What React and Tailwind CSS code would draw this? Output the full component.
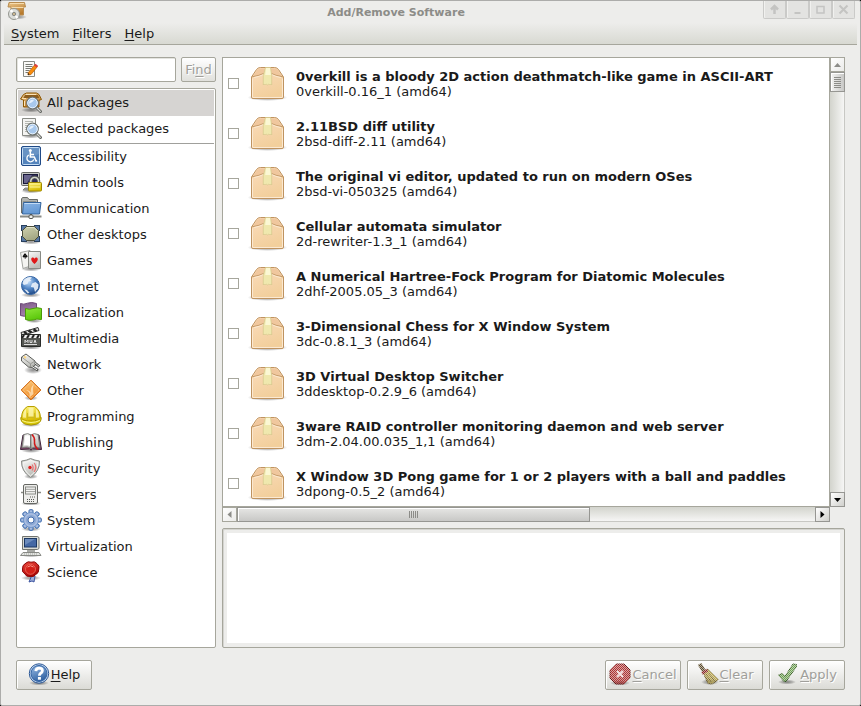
import React from "react";

const packages = [
  ["0verkill is a bloody 2D action deathmatch-like game in ASCII-ART", "0verkill-0.16_1 (amd64)"],
  ["2.11BSD diff utility", "2bsd-diff-2.11 (amd64)"],
  ["The original vi editor, updated to run on modern OSes", "2bsd-vi-050325 (amd64)"],
  ["Cellular automata simulator", "2d-rewriter-1.3_1 (amd64)"],
  ["A Numerical Hartree-Fock Program for Diatomic Molecules", "2dhf-2005.05_3 (amd64)"],
  ["3-Dimensional Chess for X Window System", "3dc-0.8.1_3 (amd64)"],
  ["3D Virtual Desktop Switcher", "3ddesktop-0.2.9_6 (amd64)"],
  ["3ware RAID controller monitoring daemon and web server", "3dm-2.04.00.035_1,1 (amd64)"],
  ["X Window 3D Pong game for 1 or 2 players with a ball and paddles", "3dpong-0.5_2 (amd64)"],
];

function Gradient({ id, from, to }) {
  return (
    <linearGradient id={id} x1="0" y1="0" x2="0.4" y2="1">
      <stop offset="0" stopColor={from} />
      <stop offset="1" stopColor={to} />
    </linearGradient>
  );
}

function SharedDefs() {
  return (
    <svg className="absolute h-0 w-0" aria-hidden="true">
      <defs>
        <Gradient id="gBlue" from="#9cbfe8" to="#3465a4" />
        <Gradient id="gSky" from="#8ab4e4" to="#6498d4" />
        <Gradient id="gGrey" from="#fbfbfa" to="#bcbdb8" />
        <Gradient id="gBrown" from="#edc88c" to="#b87a2c" />
        <Gradient id="gYellow" from="#fff47a" to="#d8bc00" />
        <Gradient id="gGreen" from="#90e83c" to="#5cc80c" />
        <Gradient id="gPurple" from="#7c5886" to="#a888b0" />
        <Gradient id="gOrange" from="#fccc80" to="#f08c28" />
        <Gradient id="gRed" from="#f04a40" to="#a80404" />
        <Gradient id="gBox" from="#fbdcbc" to="#f2cf9c" />
        <Gradient id="gOlive" from="#d0d2b0" to="#a4a884" />
        <Gradient id="gScreen" from="#7c9cd0" to="#244480" />
        <radialGradient id="gGlobe" cx="0.4" cy="0.3" r="0.7">
          <stop offset="0" stopColor="#c0dcfa" />
          <stop offset="0.55" stopColor="#5084c4" />
          <stop offset="1" stopColor="#204a87" />
        </radialGradient>
        <radialGradient id="gShadow">
          <stop offset="0" stopColor="#000" stopOpacity="0.45" />
          <stop offset="0.6" stopColor="#000" stopOpacity="0.22" />
          <stop offset="1" stopColor="#000" stopOpacity="0" />
        </radialGradient>
        <pattern id="checks" width="2" height="2" patternUnits="userSpaceOnUse">
          <rect width="2" height="2" fill="#666" />
          <rect width="1" height="1" fill="#fff" />
          <rect x="1" y="1" width="1" height="1" fill="#fff" />
        </pattern>
        <mask id="stipple" maskUnits="userSpaceOnUse" x="0" y="0" width="22" height="22">
          <rect width="22" height="22" fill="url(#checks)" shapeRendering="crispEdges" />
        </mask>
      </defs>
    </svg>
  );
}

const Shadow = ({ cx = 11, cy = 19.5, rx = 10, ry = 2.5 }) => (
  <ellipse cx={cx} cy={cy} rx={rx} ry={ry} fill="url(#gShadow)" />
);

const Magnifier = () => (
  <>
    <path d="M16.5 16.5l4 4" stroke="#666864" strokeWidth="3" strokeLinecap="round" />
    <path d="M17 17l3.3 3.3" stroke="#d8dad6" strokeWidth="1.2" strokeLinecap="round" />
    <circle cx="12.5" cy="12" r="5.8" fill="#a9c8ee" stroke="#6d716d" strokeWidth="1.2" />
    <circle cx="12.5" cy="12" r="4.8" fill="#a8c8ec" stroke="#e8f2fc" strokeWidth="1" />
    <path d="M9 12.500c0-3 2.300-4.400 5-3.600-1 1.800-2.800 3-5 3.600z" fill="#e4effb" />
  </>
);

const art = {
  all: (
    <>
      <Shadow cy={19} />
      <path d="M3.5 3.5l3-1.500h10l2.500 1.500 2.500 5-2.500.8V16H3.500V9L.5 8z" fill="url(#gBrown)" stroke="#8f5902" />
      <path d="M5 4h13l1.300 3H3.500z" fill="#8c5c1c" />
      <path d="M6 3.500h10M2 7.600h4M4.500 10v5" stroke="#fbe4b8" />
      <Magnifier />
    </>
  ),
  selected: (
    <>
      <Shadow cy={19} />
      <path d="M2.500 1.500h13v17h-13z" fill="#f4f4f2" stroke="#888a85" />
      <path d="M5 4.500h8M5 6.500h8M5 8.500h3M5 10.500h2M5 12.500h2M5 14.500h4" stroke="#b4b6b0" />
      <Magnifier />
    </>
  ),
  accessibility: (
    <>
      <rect x="1.500" y="1.500" width="19" height="19" rx="1.500" fill="#5484bc" stroke="#204a87" />
      <rect x="2.500" y="2.500" width="17" height="17" rx="1" fill="none" stroke="#c4dcf4" />
      <path d="M3 3h16v6Q12 12 3 12z" fill="#fff" opacity=".12" />
      <circle cx="10.300" cy="5.500" r="1.500" fill="#fff" />
      <path d="M10.300 7v5h4l1.800 4 1-.4M10.500 9.500h3.500" fill="none" stroke="#fff" strokeWidth="1.500" />
      <path d="M8.800 10a3.600 3.600 0 1 0 5 4.600" fill="none" stroke="#fff" strokeWidth="1.300" />
    </>
  ),
  admin: (
    <>
      <Shadow cy={20} />
      <rect x="1.500" y="1.500" width="18" height="13" rx="1" fill="#c8cac6" stroke="#666864" />
      <rect x="3.500" y="3.500" width="14" height="9" fill="#302c58" stroke="#181838" />
      <path d="M4 4h8l-5 8H4z" fill="#68648c" />
      <path d="M5 17h6v2H3z" fill="#a4a6a2" stroke="#72746f" strokeWidth=".8" />
      <path d="M10.800 12V9.500a4 4 0 0 1 7.800 0V12" fill="none" stroke="#555753" strokeWidth="3.200" />
      <path d="M10.800 12V9.500a4 4 0 0 1 7.800 0V12" fill="none" stroke="#d3d7cf" strokeWidth="1.400" />
      <rect x="8.500" y="11.500" width="13" height="8.500" rx=".8" fill="url(#gYellow)" stroke="#a08800" />
      <path d="M10 13h10M10 16h10" stroke="#fff69a" />
    </>
  ),
  communication: (
    <>
      <path d="M1.500 16V2l1-1.500h5L9 2.500h8.500V16z" fill="#b4b6b2" stroke="#696b67" />
      <path d="M3 4.500h13M3 6.500h4" stroke="#8e908c" />
      <path d="M3.500 5.500h17.500L19.500 17H2.500z" fill="url(#gSky)" stroke="#34649c" />
      <path d="M4.500 6.500h15.500" stroke="#c3dbf5" />
      <path d="M0 19.500h21.500" stroke="#888a85" strokeWidth="2" />
      <path d="M11 17v1" stroke="#555753" strokeWidth="2" />
      <rect x="9" y="18" width="4" height="3.500" rx="1" fill="#f0f0ee" stroke="#555753" />
    </>
  ),
  desktops: (
    <>
      <Shadow cy={19} />
      <g fill="#5878a4" stroke="#28405e">
        <rect x="1.500" y="2.500" width="5" height="5" />
        <rect x="14.500" y="2.500" width="5" height="5" />
        <rect x="1.500" y="13.500" width="5" height="5" />
        <rect x="14.500" y="13.500" width="5" height="5" />
      </g>
      <path d="M6.500 3.500h8l4 4v6l-4 4h-8l-4-4v-6z" fill="url(#gOlive)" stroke="#4c4e3a" />
      <path d="M7 4.500h7l3.500 3.500" fill="none" stroke="#e2e4cb" />
    </>
  ),
  games: (
    <>
      <Shadow cy={20} />
      <path d="M.5 3.500L10 1.500l2 15-9 3z" fill="#f4f4f2" stroke="#a4a6a2" />
      <circle cx="5" cy="5.600" r="1.200" fill="#111" />
      <circle cx="4" cy="7.300" r="1.200" fill="#111" />
      <circle cx="6.200" cy="7.200" r="1.200" fill="#111" />
      <path d="M5 6.500L6 9.500H4.600z" fill="#111" />
      <path d="M8.500 2.500h12v17h-12z" fill="url(#gGrey)" stroke="#888a85" />
      <path d="M14.500 15c-2-2-3.300-3.300-3.300-4.800 0-1.900 2.500-2.100 3.300-.5.8-1.600 3.300-1.400 3.300.5 0 1.500-1.300 2.800-3.300 4.800z" fill="#e01818" />
    </>
  ),
  internet: (
    <>
      <Shadow cy={20} />
      <circle cx="10.500" cy="10.500" r="9" fill="url(#gGlobe)" stroke="#3465a4" />
      <path d="M3.500 5c3-2.800 6.500-3.700 8.500-2.500l-2 2 1.500 1.500-3 .5-1 2.500-3.500 1-1.500-1.500zM12 8.500l3.500-1.500 3 2.500-.5 4-3 3.500-1.200-4.500-3-.500zM4 14l3 1 2.500 3-2 .3z" fill="#ecf3fb" opacity=".9" />
    </>
  ),
  localization: (
    <>
      <Shadow cx={14} cy={20} rx={8} ry={2} />
      <path d="M.5 2.500q3 1.500 7-.3 4-1.500 9 .3v12q-5-1-8.500.3-4 1-7.500-.3z" fill="url(#gPurple)" stroke="#6c4878" />
      <path d="M5.500 7.500q4 1.500 7.500 0 4-1.500 8.500 0v11q-5-1-8.500.5-4 1-7.500-.5z" fill="url(#gGreen)" stroke="#4a9a08" />
    </>
  ),
  multimedia: (
    <>
      <Shadow cy={20.500} />
      <path d="M1 5.500L18 .5l1 3-17 5z" fill="#e4e4e2" stroke="#333" />
      <path d="M4 5l3 2M8.500 3.500l3 2M13.500 2.200l3 2" stroke="#222" strokeWidth="2.300" />
      <path d="M1.500 7.500h19v12h-19z" fill="#555753" stroke="#2a2c2a" />
      <path d="M2 8h18v3H2z" fill="#eee" />
      <path d="M4 8l-2 3M9 8l-2 3M14 8l-2 3M19 8l-2 3" stroke="#222" strokeWidth="2.200" />
      <path d="M5 16v-3l1.500 2 1.500-2v3M10 13v2.500h2V13M14 16l1-3 1 3M4 17.500h13" fill="none" stroke="#ddd" />
    </>
  ),
  network: (
    <>
      <Shadow cx={13} cy={17} rx={9} ry={4} />
      <path d="M1.500 4l4.500-3 9 7 .5 4-4 2.500-3-.5-7-6z" fill="url(#gGrey)" stroke="#5c5e5a" />
      <path d="M2 4.300l8.500 6.500 4-2.500M10.500 11v3" fill="none" stroke="#8a8c88" strokeWidth=".8" />
      <path d="M4 3.500l2 1.400" stroke="#fcd680" strokeWidth="2" />
      <path d="M15 10l4.500 3.500M12 13.500l6 4" stroke="#555753" strokeWidth="2.600" />
      <path d="M15 10l4 3.200M12 13.500l5 3.300" stroke="#eceeec" />
    </>
  ),
  other: (
    <>
      <Shadow cy={19} rx={7} />
      <path d="M11 1.200L20.800 11 11 20.800 1.200 11z" fill="url(#gOrange)" stroke="#ce5c00" />
      <path d="M11 2.800l8.200 8.200-8.200 8.200L2.800 11z" fill="none" stroke="#fbd8a0" strokeWidth=".8" strokeDasharray="1 1" />
      <path d="M9 19c1.500-4 .500-6-3-8 2.500.2 4 1 4.800 2.500C10.500 10 11 7.500 14 5c-1.500 3.500-1 6-.5 10" fill="#fde6c2" opacity=".75" />
    </>
  ),
  programming: (
    <>
      <Shadow cy={19.500} />
      <path d="M.8 12.500Q.5 17 5 19q6 2.200 12 0 4.500-2 4.200-6.500z" fill="#d8c808" stroke="#a89400" />
      <path d="M1.500 13Q1.500 5 7.500 1.500h7q6 3.500 6 11.500-2 3-9.500 3t-9.500-3z" fill="url(#gYellow)" stroke="#b8a000" />
      <path d="M7.500 15.200V8M14.500 15.200V8M8 12.500h6" stroke="#cdb820" />
      <path d="M8.500 11.500V2.500h5v9zM3 12.500Q3 6 6 4v8.800zM19 12.500Q19 6 16 4v8.800z" fill="#fffbc4" opacity=".7" />
      <path d="M2 15.500q9 4 18 0" fill="none" stroke="#fbf48c" />
    </>
  ),
  publishing: (
    <>
      <Shadow cy={19.500} />
      <path d="M.5 18.500L3 4h16l2.500 14.500-9-.5-1.500 1-1.500-1z" fill="#7a4a68" stroke="#40243a" />
      <path d="M2 16.500L4 3.500q4-2 7 .5 3-2.500 7-.5l2 13q-6-1.500-9 1-3-2.500-9-1z" fill="url(#gGrey)" stroke="#7c7e7a" />
      <path d="M3.800 14.500L5.300 5q3-1 4.700.5v9.500q-3-1.200-6.200-.5z" fill="#fff" />
      <path d="M10.800 4v13" stroke="#555753" />
      <path d="M12 3.500q3 3 2.500 7t3.500 8" fill="none" stroke="#d01818" strokeWidth="1.500" />
    </>
  ),
  security: (
    <>
      <Shadow cy={19.500} rx={7} />
      <path d="M10.500 1.500Q15 3.500 19.500 4 20 14 10.500 20.500 1 14 1.500 4 6.500 3.500 10.500 1.500z" fill="#c8cac6" stroke="#8c8e8a" />
      <path d="M10.500 3Q14 5 18 5.300 18 13.500 10.500 18.800 3 13.500 3 5.300 7 5 10.500 3z" fill="url(#gGrey)" stroke="#f6f6f4" />
      <circle cx="10" cy="10.500" r="1.700" fill="#e02020" />
      <path d="M12 7.500q2.300 3 0 6M14.200 6q3.500 4.500 0 9" fill="none" stroke="#e87070" strokeWidth="1.200" />
    </>
  ),
  servers: (
    <>
      <Shadow cy={20.500} />
      <path d="M1 9.500h20" stroke="#888a85" strokeWidth="1.500" />
      <rect x="3.500" y="1.500" width="14" height="19" rx="1.500" fill="#eeeeec" stroke="#666864" />
      <rect x="5.500" y="4" width="10" height="7" fill="#f6f6f4" stroke="#888a85" />
      <path d="M6 6.300h9M6 8.600h9" stroke="#a0a29e" />
      <path d="M10 14h1m1 0h1m1 0h1M7 16.500h1m1 0h1m1 0h1m1 0h1M7 18.500h1m1 0h1m1 0h1m1 0h1" stroke="#555753" />
    </>
  ),
  system: (
    <>
      <Shadow cy={20} />
      <g fill="#a8bce0" stroke="#3868ac">
        {[0, 45, 90, 135].map((angle) => (
          <rect key={angle} x="9" y=".7" width="4" height="20.600" rx="1" transform={`rotate(${angle} 11 11)`} />
        ))}
      </g>
      <circle cx="11" cy="11" r="7.500" fill="#a8bce0" stroke="#5c88c4" strokeWidth=".7" />
      <circle cx="11" cy="11" r="5.200" fill="#8ca8d4" />
      <circle cx="11" cy="11" r="3" fill="#fff" stroke="#446cac" />
    </>
  ),
  virtualization: (
    <>
      <Shadow cy={20} />
      <path d="M2.500 1.500h15l1.500 1v11l-1.500 1h-15z" fill="#d8dad4" stroke="#72746f" />
      <rect x="4.500" y="3.500" width="12" height="8.500" fill="#4468a4" stroke="#1c3864" />
      <path d="M5 4h10L5 10z" fill="#a8c0e0" opacity=".4" />
      <path d="M7 15h8v2H7z" fill="#a8aaa6" />
      <path d="M3 17.500h16l2 3H.5z" fill="#e4e6e2" stroke="#888a85" />
      <path d="M4 19h13" stroke="#a4a6a2" strokeDasharray="1 1" />
    </>
  ),
  science: (
    <>
      <Shadow cy={17} />
      <path d="M12 14l-3 7 3-1 2 1 1-6z" fill="#9cacd8" stroke="#3c54a0" />
      <path d="M6 2q2-2 5-.8 4-1.400 6 1.500 3 2 1.800 5.300.2 4-3 5.500-2.300 3-5.800 2-4 .500-5-2.500Q1.500 11 2.500 8 2 4 6 2z" fill="url(#gRed)" stroke="#8c0808" />
      <circle cx="10.500" cy="8.300" r="5" fill="#d42018" stroke="#f07060" strokeWidth=".8" />
      <path d="M7.500 6q3-2.500 6 0" fill="none" stroke="#fa9a8c" />
    </>
  ),
  help: (
    <>
      <Shadow cy={20} />
      <circle cx="11" cy="10.500" r="9.700" fill="#c6daf2" stroke="#2c5896" />
      <circle cx="11" cy="10.500" r="8" fill="url(#gBlue)" stroke="#3465a4" />
      <path d="M7.800 8.200Q8 5.200 11.200 5.200q3.200.1 3.200 2.600 0 1.500-2 2.700-1 .700-1 2.300" fill="none" stroke="#fff" strokeWidth="2.800" />
      <rect x="9.900" y="14" width="3" height="2.700" fill="#fff" />
    </>
  ),
  cancel: (
    <>
      <Shadow cy={20} />
      <g mask="url(#stipple)">
        <path d="M7 1h8l6 6v8l-6 6H7l-6-6V7z" fill="#b03434" stroke="#701414" />
        <path d="M8 8l6 6m0-6l-6 6" stroke="#f4dcdc" strokeWidth="2" />
      </g>
    </>
  ),
  clear: (
    <>
      <Shadow cx={13} cy={19} rx={9} ry={3} />
      <g mask="url(#stipple)">
        <path d="M2.500 1l4.500 7" stroke="#5c4c2c" strokeWidth="4" />
        <path d="M6 9l5-3 7 7 3.500 3.500L15 21l-4-.5Q8.500 15 6 9z" fill="#b8a44c" stroke="#6c5c28" />
        <path d="M5 10.500L10.500 7" stroke="#8c2828" strokeWidth="3" />
        <path d="M9 11l5 8M11.500 10l6 8M8 13l3 5" stroke="#7c6a30" />
      </g>
    </>
  ),
  apply: (
    <>
      <Shadow cx={10} cy={19} rx={9} ry={2.500} />
      <g mask="url(#stipple)">
        <path d="M1.500 12l4-1.500 2.500 3 8-12.500 3.500.5v2L9 18.500H7z" fill="#70a454" stroke="#345c20" />
      </g>
    </>
  ),
  note: (
    <>
      <path d="M4.500 2.500h11v15h-11z" fill="#fafaf8" stroke="#888a85" />
      <path d="M6.500 5.500h7M6.500 7.500h7M6.500 9.500h6M6.500 11.500h4M6.500 13.500h3" stroke="#777974" />
      <path d="M9 14l7-8.500 2.500 2L12 15.500l-3 .5z" fill="#f88c0c" stroke="#b85c00" strokeWidth=".7" />
      <path d="M15 6.500l1.500-1.700 2.500 2-1.500 1.800z" fill="#e04040" />
      <path d="M8.800 16l.4-2 1.500 1.500z" fill="#222" />
    </>
  ),
  app: (
    <>
      <Shadow cy={16} cx={10} />
      <path d="M2 1.500h15.500l1 4.500h-2v8H4V6H1z" fill="url(#gBrown)" stroke="#b88c50" />
      <path d="M3 2.500h14M4.500 6.500h12" stroke="#f6dcae" />
      <circle cx="7" cy="13" r="5.500" fill="#dcdedb" stroke="#94968f" />
      <path d="M7 13L2.500 10 5 8zM7 13l4.500 3-2 2z" fill="#fff" />
      <circle cx="7" cy="13" r="1.700" fill="#c8b48e" stroke="#888a85" />
    </>
  ),
};

function Icon({ name }) {
  return (
    <svg viewBox="0 0 22 22" className="size-[22px] shrink-0" fill="none" aria-hidden="true">
      {art[name]}
    </svg>
  );
}

function PackageIcon() {
  return (
    <svg viewBox="0 0 40 40" className="size-10 shrink-0" fill="none" aria-hidden="true">
      <ellipse cx="19.500" cy="33.500" rx="20" ry="3.500" fill="url(#gShadow)" />
      <path d="M3.500 13L8.500 5.500Q10 3.500 12.500 3.500h14q2.500 0 4 2L35.500 13v20q0 1.500-1.500 1.500H5Q3.500 34.500 3.500 33z" fill="url(#gBox)" stroke="#bf9360" />
      <path d="M4.800 12.500L9.300 6Q10.500 4.500 12.500 4.500h14q2 0 3.200 1.500l4.500 6.500Q19 8.500 4.800 12.500z" fill="#f0c79e" />
      <path d="M4 12.800Q12 11.500 15.500 9.500h8q3.500 2 11.500 3.300" stroke="#c49a68" />
      <path d="M6 13.700Q12 12.300 15.500 10.500M33 13.700q-6-1.400-9.500-3.200M4.500 14.500V33q0 .5.500.5h29q.5 0 .5-.5V14.500" stroke="#fbe9d2" />
      <path d="M17.500 3.500h5l1.200 8v9.500l-1-1-1 1-1-1-1.200 1-1.200-1-1 1-1-1-1 1v-9.500z" fill="#efe8ae" stroke="#d4c88c" strokeWidth=".7" />
      <path d="M18 4h4l.8 7h-5.600z" fill="#fbf8d4" />
    </svg>
  );
}

const Mnemonic = ({ text, at = 0 }) => (
  <span>
    {text.slice(0, at)}
    <span className="underline decoration-1 underline-offset-2 [text-decoration-skip-ink:none]">{text[at]}</span>
    {text.slice(at + 1)}
  </span>
);

const categories = [
  ["Accessibility", "accessibility"],
  ["Admin tools", "admin"],
  ["Communication", "communication"],
  ["Other desktops", "desktops"],
  ["Games", "games"],
  ["Internet", "internet"],
  ["Localization", "localization"],
  ["Multimedia", "multimedia"],
  ["Network", "network"],
  ["Other", "other"],
  ["Programming", "programming"],
  ["Publishing", "publishing"],
  ["Security", "security"],
  ["Servers", "servers"],
  ["System", "system"],
  ["Virtualization", "virtualization"],
  ["Science", "science"],
];

function Category({ label, icon, selected }) {
  return (
    <li>
      <button
        type="button"
        aria-pressed={!!selected}
        className={`flex h-[26px] w-full items-center gap-[5px] pb-[2px] pl-[2px] text-left ${selected ? "bg-[#d6d4d2]" : ""}`}
      >
        <Icon name={icon} />
        {label}
      </button>
    </li>
  );
}

function ActionButton({ label, icon, disabled }) {
  return (
    <button
      type="button"
      disabled={disabled}
      className="flex h-[30px] w-[76px] items-center justify-center gap-px rounded-[2px] border border-[#a6a69c] bg-linear-to-b from-white to-[#dbdbd6] pb-[2px] shadow-[inset_1px_1px_0_#fff] disabled:text-[#a09f9b] disabled:[text-shadow:1px_1px_0_#fff]"
    >
      <Icon name={icon} />
      <Mnemonic text={label} />
    </button>
  );
}

const arrows = {
  up: "M3 9h7L6.500 5z",
  down: "M3 5h7L6.500 9z",
  left: "M8.500 3v7l-4-3.500z",
  right: "M4.500 3v7l4-3.500z",
};

function ScrollButton({ dir, disabled }) {
  return (
    <button
      type="button"
      aria-label={`Scroll ${dir}`}
      disabled={disabled}
      className="size-[15px] shrink-0 border border-[#969692] bg-linear-to-br from-white to-[#d0d0cc] text-black disabled:border-[#a6a69c] disabled:to-[#ebebe9] disabled:text-[#8c8c88]"
    >
      <svg viewBox="0 0 13 13" className="size-[13px]" aria-hidden="true">
        <path d={arrows[dir]} fill="currentColor" />
      </svg>
    </button>
  );
}

const windowControls = [
  ["Shade", <path key="s" d="M6.500 11V3M3 6.500L6.500 3 10 6.500" strokeWidth="2.500" />],
  ["Minimize", <path key="m" d="M3.500 10h6" strokeWidth="2" />],
  ["Maximize", <path key="x" d="M3 3.500h7v6.500H3z" strokeWidth="1.500" />],
  ["Close", <path key="c" d="M2.500 2.500l8 8m0-8l-8 8" strokeWidth="2" />],
];

export default function App() {
  return (
    <div className="h-screen bg-black font-['DejaVu_Sans',sans-serif] text-[13px] leading-[15px] text-[#1a1a1a]">
      <SharedDefs />
      <div className="flex h-full flex-col rounded-[2px] border border-[#acacaa] bg-[#ededeb] px-[3px]">
        <header className="flex h-[22px] shrink-0 items-start pl-[3px]">
          <Icon name="app" />
          <h1 className="flex-1 self-center text-center text-[11px] font-bold text-[#8c8c88]">Add/Remove Software</h1>
          <div className="flex pr-[2px]">
            {windowControls.map(([name, shape]) => (
              <button
                key={name}
                type="button"
                aria-label={name}
                className="flex h-[18px] w-[23px] items-center justify-center rounded-b-[2px] border border-t-0 border-[#cacac8] bg-[#e3e3e1] shadow-[inset_1px_0_0_#f1f1ef]"
              >
                <svg viewBox="0 0 13 13" className="size-[13px]" fill="none" stroke="#c4c4c2" aria-hidden="true">
                  {shape}
                </svg>
              </button>
            ))}
          </div>
        </header>

        <nav className="flex h-[22px] shrink-0 items-center gap-[13px] border-b border-[#a6a69c] bg-linear-to-b from-[#ededeb] to-[#d8d9d2] pl-[7px]">
          {["System", "Filters", "Help"].map((menu) => (
            <button key={menu} type="button">
              <Mnemonic text={menu} />
            </button>
          ))}
        </nav>

        <main className="flex min-h-0 flex-1 gap-[6px] px-3 pt-3">
          <aside className="flex w-[200px] shrink-0 flex-col gap-[6px]">
            <form className="flex h-[25px] gap-[5px]" onSubmit={(e) => e.preventDefault()}>
              <label className="flex min-w-0 flex-1 items-center rounded-[2px] border border-[#a6a69c] bg-white pl-[2px] shadow-[inset_1px_1px_0_#e4e4e0]">
                <Icon name="note" />
                <input aria-label="Search packages" className="h-full min-w-0 flex-1 bg-transparent px-1 outline-none" />
              </label>
              <button
                type="submit"
                disabled
                className="w-[35px] rounded-[2px] border border-[#a6a69c] bg-linear-to-b from-white to-[#e0e0dc] text-[#a09f9b] [text-shadow:1px_1px_0_#fff]"
              >
                <Mnemonic text="Find" at={2} />
              </button>
            </form>
            <div className="min-h-0 flex-1 overflow-hidden rounded-[2px] border border-[#a6a69c] bg-white p-px">
              <ul>
                <Category label="All packages" icon="all" selected />
                <Category label="Selected packages" icon="selected" />
              </ul>
              <hr className="mt-px border-[#a0a09c]" />
              <ul>
                {categories.map(([label, icon]) => (
                  <Category key={label} label={label} icon={icon} />
                ))}
              </ul>
            </div>
          </aside>

          <section className="flex min-w-0 flex-1 flex-col gap-[6px]">
            <div className="flex min-h-0 flex-1">
              <div className="flex min-w-0 flex-1 flex-col">
                <ul className="min-h-0 flex-1 overflow-hidden border border-[#a6a69c] bg-white pt-px">
                  {packages.map(([title, version], i) => (
                    <li key={version}>
                      <label htmlFor={`pkg-${i}`} className="flex h-[50px] items-center pl-[5px] whitespace-nowrap">
                        <input
                          id={`pkg-${i}`}
                          type="checkbox"
                          className="mr-[9px] mb-[2px] size-[11px] shrink-0 appearance-none border border-[#a6a69c] bg-white checked:bg-[#4b6983]"
                        />
                        <PackageIcon />
                        <span className="ml-2">
                          <b className="block">{title}</b>
                          <span className="block">{version}</span>
                        </span>
                      </label>
                    </li>
                  ))}
                </ul>
                <div className="flex h-[15px] shrink-0">
                  <ScrollButton dir="left" disabled />
                  <div className="flex flex-1 border-b border-[#c8c8c4] bg-linear-to-b from-[#d3d4cd] to-[#f6f6f5]">
                    <div className="-mb-px flex w-[61%] items-center justify-center gap-px border border-[#969692] bg-linear-to-b from-[#e6e6e4] to-[#c8c8c6] shadow-[inset_1px_1px_0_#fff]">
                      {[0, 1, 2, 3, 4].map((n) => (
                        <span key={n} className="h-[7px] w-px bg-[#8c8c88]" />
                      ))}
                    </div>
                  </div>
                  <ScrollButton dir="right" />
                </div>
              </div>
              <div className="mb-[15px] flex w-[15px] shrink-0 flex-col">
                <ScrollButton dir="up" disabled />
                <div className="flex-1 border-r border-[#c8c8c4] bg-linear-to-r from-[#d3d4cd] to-[#f6f6f5]">
                  <div className="-mr-px flex h-5 flex-col items-center justify-center gap-px border border-[#969692] bg-linear-to-r from-[#f4f4f3] to-[#c8c8c6] shadow-[inset_1px_1px_0_#fff]">
                    {[0, 1, 2, 3, 4, 5].map((n) => (
                      <span key={n} className="h-px w-[7px] bg-[#8c8c88]" />
                    ))}
                  </div>
                </div>
                <ScrollButton dir="down" />
              </div>
            </div>
            <div className="flex h-[120px] shrink-0 rounded-[2px] border border-[#a6a69c] bg-[#ededeb] p-1 shadow-[inset_1px_1px_0_#d4d4d0]">
              <textarea readOnly aria-label="Package description" className="flex-1 resize-none bg-white outline-none" />
            </div>
          </section>
        </main>

        <footer className="flex shrink-0 gap-[6px] px-3 pt-3 pb-[15px]">
          <ActionButton label="Help" icon="help" />
          <div className="flex-1" />
          <ActionButton label="Cancel" icon="cancel" disabled />
          <ActionButton label="Clear" icon="clear" disabled />
          <ActionButton label="Apply" icon="apply" disabled />
        </footer>
      </div>
    </div>
  );
}
